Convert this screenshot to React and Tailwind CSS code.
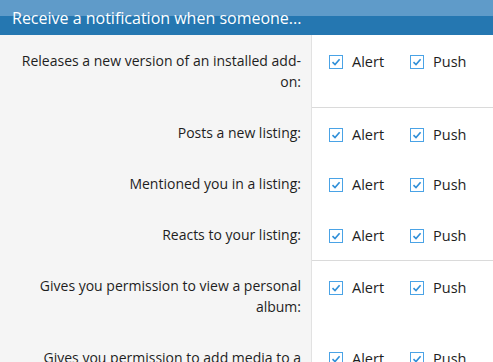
import React from 'react';

const groups = [
  ['Releases a new version of an installed add-on:'],
  ['Posts a new listing:', 'Mentioned you in a listing:', 'Reacts to your listing:'],
  ['Gives you permission to view a personal album:', 'Gives you permission to add media to a personal album:'],
];

const CheckIcon = () => (
  <svg width="14" height="14" viewBox="0 0 14 14" className="shrink-0">
    <rect x="0.5" y="0.5" width="13" height="13" fill="#fff" stroke="#4aa3e6" />
    <path d="M3.5 7.2 L6 9.6 L10.6 4.2" fill="none" stroke="#2f8fd8" strokeWidth="1.6" />
  </svg>
);

const Option = ({ label }) => (
  <label className="flex items-center gap-[9px] text-[14.5px]">
    <CheckIcon />
    <span>{label}</span>
  </label>
);

const Row = ({ text, separator }) => (
  <div className="flex">
    <div className="w-[312px] shrink-0 bg-[#f5f5f5] border-r border-[#e2e2e2] text-right pr-[10px] pl-3 py-[15px] leading-[21px]">
      {text}
    </div>
    <div className={`flex-1 flex items-start gap-[26px] pl-[17px] pt-[16px] ${separator ? 'border-t border-[#dadada]' : ''}`}>
      <Option label="Alert" />
      <Option label="Push" />
    </div>
  </div>
);

export default function App() {
  return (
    <div className="w-[493px] h-[362px] overflow-hidden bg-white text-[14px] text-[#1e1e1e]" style={{ fontFamily: '"Open Sans", sans-serif' }}>
      <div className="h-[35px] flex items-center px-[12px] text-[16px] text-white bg-[linear-gradient(to_bottom,#5f9bc9_0%,#5f9bc9_47%,#2577b1_47%,#2577b1_100%)]">
        Receive a notification when someone...
      </div>
      {groups.map((g, gi) => (
        <div key={gi}>
          {g.map((t, i) => (
            <Row key={t} text={t} separator={gi > 0 && i === 0} />
          ))}
        </div>
      ))}
    </div>
  );
}
